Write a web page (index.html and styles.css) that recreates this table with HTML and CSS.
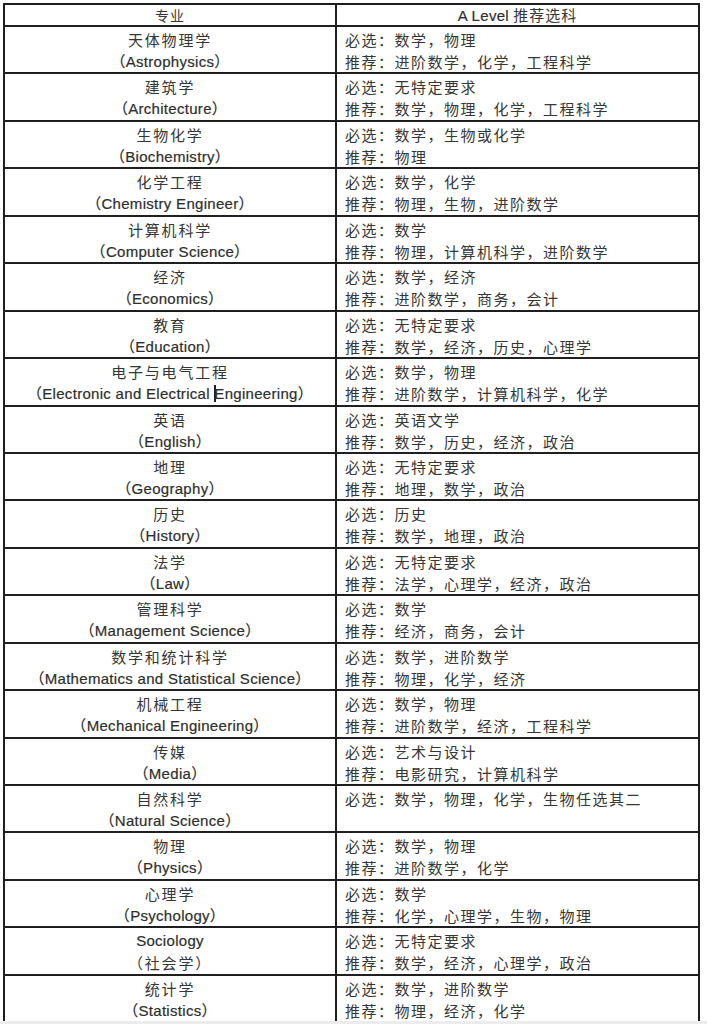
FILE: index.html
```html
<!DOCTYPE html>
<html lang="zh-CN">
<head>
<meta charset="utf-8">
<title>A Level 推荐选科</title>
<link rel="stylesheet" href="styles.css">
</head>
<body>
<div class="sheet">
  <div class="table">
    <div class="row head">
      <div class="c1 zh">专业</div>
      <div class="c2 hd"><span class="en">A Level</span> 推荐选科</div>
    </div>

    <div class="row"><div class="c1"><div class="zh">天体物理学</div><div class="en">（Astrophysics）</div></div><div class="c2"><div>必选：数学，物理</div><div>推荐：进阶数学，化学，工程科学</div></div></div>
    <div class="row"><div class="c1"><div class="zh">建筑学</div><div class="en">（Architecture）</div></div><div class="c2"><div>必选：无特定要求</div><div>推荐：数学，物理，化学，工程科学</div></div></div>
    <div class="row"><div class="c1"><div class="zh">生物化学</div><div class="en">（Biochemistry）</div></div><div class="c2"><div>必选：数学，生物或化学</div><div>推荐：物理</div></div></div>
    <div class="row"><div class="c1"><div class="zh">化学工程</div><div class="en">（Chemistry Engineer）</div></div><div class="c2"><div>必选：数学，化学</div><div>推荐：物理，生物，进阶数学</div></div></div>
    <div class="row"><div class="c1"><div class="zh">计算机科学</div><div class="en">（Computer Science）</div></div><div class="c2"><div>必选：数学</div><div>推荐：物理，计算机科学，进阶数学</div></div></div>
    <div class="row"><div class="c1"><div class="zh">经济</div><div class="en">（Economics）</div></div><div class="c2"><div>必选：数学，经济</div><div>推荐：进阶数学，商务，会计</div></div></div>
    <div class="row"><div class="c1"><div class="zh">教育</div><div class="en">（Education）</div></div><div class="c2"><div>必选：无特定要求</div><div>推荐：数学，经济，历史，心理学</div></div></div>
    <div class="row"><div class="c1"><div class="zh">电子与电气工程</div><div class="en">（Electronic and Electrical <span class="caret"></span>Engineering）</div></div><div class="c2"><div>必选：数学，物理</div><div>推荐：进阶数学，计算机科学，化学</div></div></div>
    <div class="row"><div class="c1"><div class="zh">英语</div><div class="en">（English）</div></div><div class="c2"><div>必选：英语文学</div><div>推荐：数学，历史，经济，政治</div></div></div>
    <div class="row"><div class="c1"><div class="zh">地理</div><div class="en">（Geography）</div></div><div class="c2"><div>必选：无特定要求</div><div>推荐：地理，数学，政治</div></div></div>
    <div class="row"><div class="c1"><div class="zh">历史</div><div class="en">（History）</div></div><div class="c2"><div>必选：历史</div><div>推荐：数学，地理，政治</div></div></div>
    <div class="row"><div class="c1"><div class="zh">法学</div><div class="en">（Law）</div></div><div class="c2"><div>必选：无特定要求</div><div>推荐：法学，心理学，经济，政治</div></div></div>
    <div class="row"><div class="c1"><div class="zh">管理科学</div><div class="en">（Management Science）</div></div><div class="c2"><div>必选：数学</div><div>推荐：经济，商务，会计</div></div></div>
    <div class="row"><div class="c1"><div class="zh">数学和统计科学</div><div class="en">（Mathematics and Statistical Science）</div></div><div class="c2"><div>必选：数学，进阶数学</div><div>推荐：物理，化学，经济</div></div></div>
    <div class="row"><div class="c1"><div class="zh">机械工程</div><div class="en">（Mechanical Engineering）</div></div><div class="c2"><div>必选：数学，物理</div><div>推荐：进阶数学，经济，工程科学</div></div></div>
    <div class="row"><div class="c1"><div class="zh">传媒</div><div class="en">（Media）</div></div><div class="c2"><div>必选：艺术与设计</div><div>推荐：电影研究，计算机科学</div></div></div>
    <div class="row"><div class="c1"><div class="zh">自然科学</div><div class="en">（Natural Science）</div></div><div class="c2"><div>必选：数学，物理，化学，生物任选其二</div></div></div>
    <div class="row"><div class="c1"><div class="zh">物理</div><div class="en">（Physics）</div></div><div class="c2"><div>必选：数学，物理</div><div>推荐：进阶数学，化学</div></div></div>
    <div class="row"><div class="c1"><div class="zh">心理学</div><div class="en">（Psychology）</div></div><div class="c2"><div>必选：数学</div><div>推荐：化学，心理学，生物，物理</div></div></div>
    <div class="row"><div class="c1"><div class="en">Sociology</div><div class="zh">（社会学）</div></div><div class="c2"><div>必选：无特定要求</div><div>推荐：数学，经济，心理学，政治</div></div></div>
    <div class="row last"><div class="c1"><div class="zh">统计学</div><div class="en">（Statistics）</div></div><div class="c2"><div>必选：数学，进阶数学</div><div>推荐：物理，经济，化学</div></div></div>
  </div>
  <div class="strip"></div>
</div>
</body>
</html>
```

FILE: styles.css
```css
html, body {
  margin: 0;
  padding: 0;
  background: #ffffff;
}

.sheet {
  width: 707px;
  height: 1024px;
  padding: 3px 0 0 3px;
  box-sizing: border-box;
  overflow: hidden;
  position: relative;
  color: #363636;
  font-family: "Noto Sans CJK SC", "Liberation Sans", sans-serif;
}

.table {
  width: 697px;
  box-sizing: border-box;
  border-top: 2px solid #1f1f1f;
  border-left: 2px solid #1f1f1f;
  border-right: 2px solid #1f1f1f;
}

.row {
  display: grid;
  grid-template-columns: 332px 361px;
  height: 47.45px;
  box-sizing: border-box;
  border-bottom: 2px solid #1f1f1f;
}

.row.head {
  height: 22px;
}

.row.last {
  border-bottom: none;
  height: 48px;
}

.c1 {
  border-right: 2px solid #1f1f1f;
  text-align: center;
  padding-top: 2px;
  line-height: 22px;
}

.c2 {
  padding: 2px 0 0 8px;
  line-height: 22px;
  font-size: 15px;
  letter-spacing: 1.5px;
}

.head .c1,
.head .c2 {
  padding-top: 0;
  line-height: 20px;
  font-size: 14px;
}

.head .c2 {
  font-size: 15px;
}

.hd {
  text-align: center;
  padding-left: 0;
  letter-spacing: 1px;
}

.zh {
  font-family: "Noto Sans CJK SC", sans-serif;
  font-size: 15px;
  letter-spacing: 1.8px;
}

.head .zh {
  font-size: 14px;
  letter-spacing: 1px;
}

.en {
  font-family: "Liberation Sans", "Noto Sans CJK SC", sans-serif;
  font-size: 15px;
  letter-spacing: 0.3px;
  color: #2e2e2e;
  -webkit-text-stroke: 0.2px #2e2e2e;
}

.caret {
  display: inline-block;
  width: 2px;
  height: 17px;
  background: #222;
  vertical-align: -3px;
  margin-right: -2px;
}

.strip {
  position: absolute;
  left: 0;
  right: 0;
  bottom: 0;
  height: 3px;
  background: #ececec;
}
```
